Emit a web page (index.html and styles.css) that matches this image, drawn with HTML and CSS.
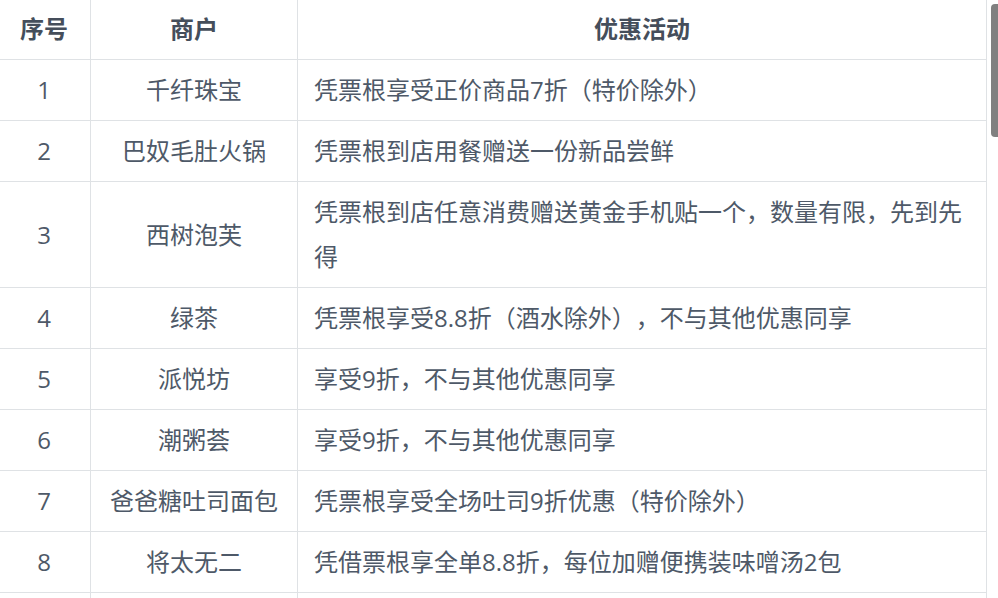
FILE: index.html
```html
<!DOCTYPE html>
<html lang="zh-CN">
<head>
<meta charset="utf-8">
<title>优惠活动</title>
<link rel="stylesheet" href="styles.css">
</head>
<body>
<div class="wrap">
  <table class="deals">
    <colgroup>
      <col class="c-no">
      <col class="c-shop">
      <col class="c-deal">
    </colgroup>
    <thead>
      <tr><th>序号</th><th>商户</th><th>优惠活动</th></tr>
    </thead>
    <tbody>
      <tr><td class="ctr">1</td><td class="ctr">千纤珠宝</td><td>凭票根享受正价商品7折（特价除外）</td></tr>
      <tr><td class="ctr">2</td><td class="ctr">巴奴毛肚火锅</td><td>凭票根到店用餐赠送一份新品尝鲜</td></tr>
      <tr><td class="ctr">3</td><td class="ctr">西树泡芙</td><td>凭票根到店任意消费赠送黄金手机贴一个，数量有限，先到先得</td></tr>
      <tr><td class="ctr">4</td><td class="ctr">绿茶</td><td>凭票根享受8.8折（酒水除外），不与其他优惠同享</td></tr>
      <tr><td class="ctr">5</td><td class="ctr">派悦坊</td><td>享受9折，不与其他优惠同享</td></tr>
      <tr><td class="ctr">6</td><td class="ctr">潮粥荟</td><td>享受9折，不与其他优惠同享</td></tr>
      <tr><td class="ctr">7</td><td class="ctr">爸爸糖吐司面包</td><td>凭票根享受全场吐司9折优惠（特价除外）</td></tr>
      <tr><td class="ctr">8</td><td class="ctr">将太无二</td><td>凭借票根享全单8.8折，每位加赠便携装味噌汤2包</td></tr>
      <tr class="next"><td></td><td></td><td></td></tr>
    </tbody>
  </table>
</div>
<div class="thumb"></div>
</body>
</html>
```
FILE: styles.css
```css
html, body {
  margin: 0;
  padding: 0;
  overflow: hidden;
  background: #ffffff;
}
body {
  font-family: "Open Sans", "Noto Sans CJK SC", sans-serif;
  font-size: 24px;
  color: #4e5968;
  text-spacing-trim: space-all;
}
.wrap {
  margin: -2px 0 0 -3px;
}
.deals {
  border-collapse: collapse;
  table-layout: fixed;
  width: 989px;
}
.c-no { width: 93px; }
.c-shop { width: 207px; }
.c-deal { width: 689px; }
.deals th,
.deals td {
  border: 1px solid #dfe2e5;
  padding: 7px 16px 8px;
  line-height: 45px;
  text-align: left;
  vertical-align: middle;
}
.deals th {
  text-align: center;
  font-weight: 700;
  color: #454e5b;
}
.deals td.ctr {
  text-align: center;
}
.deals tr.next td {
  height: 45px;
}
.thumb {
  position: fixed;
  top: 4px;
  right: 0;
  width: 7px;
  height: 133px;
  background: #808080;
  border-radius: 4px 0 0 4px;
}
```
